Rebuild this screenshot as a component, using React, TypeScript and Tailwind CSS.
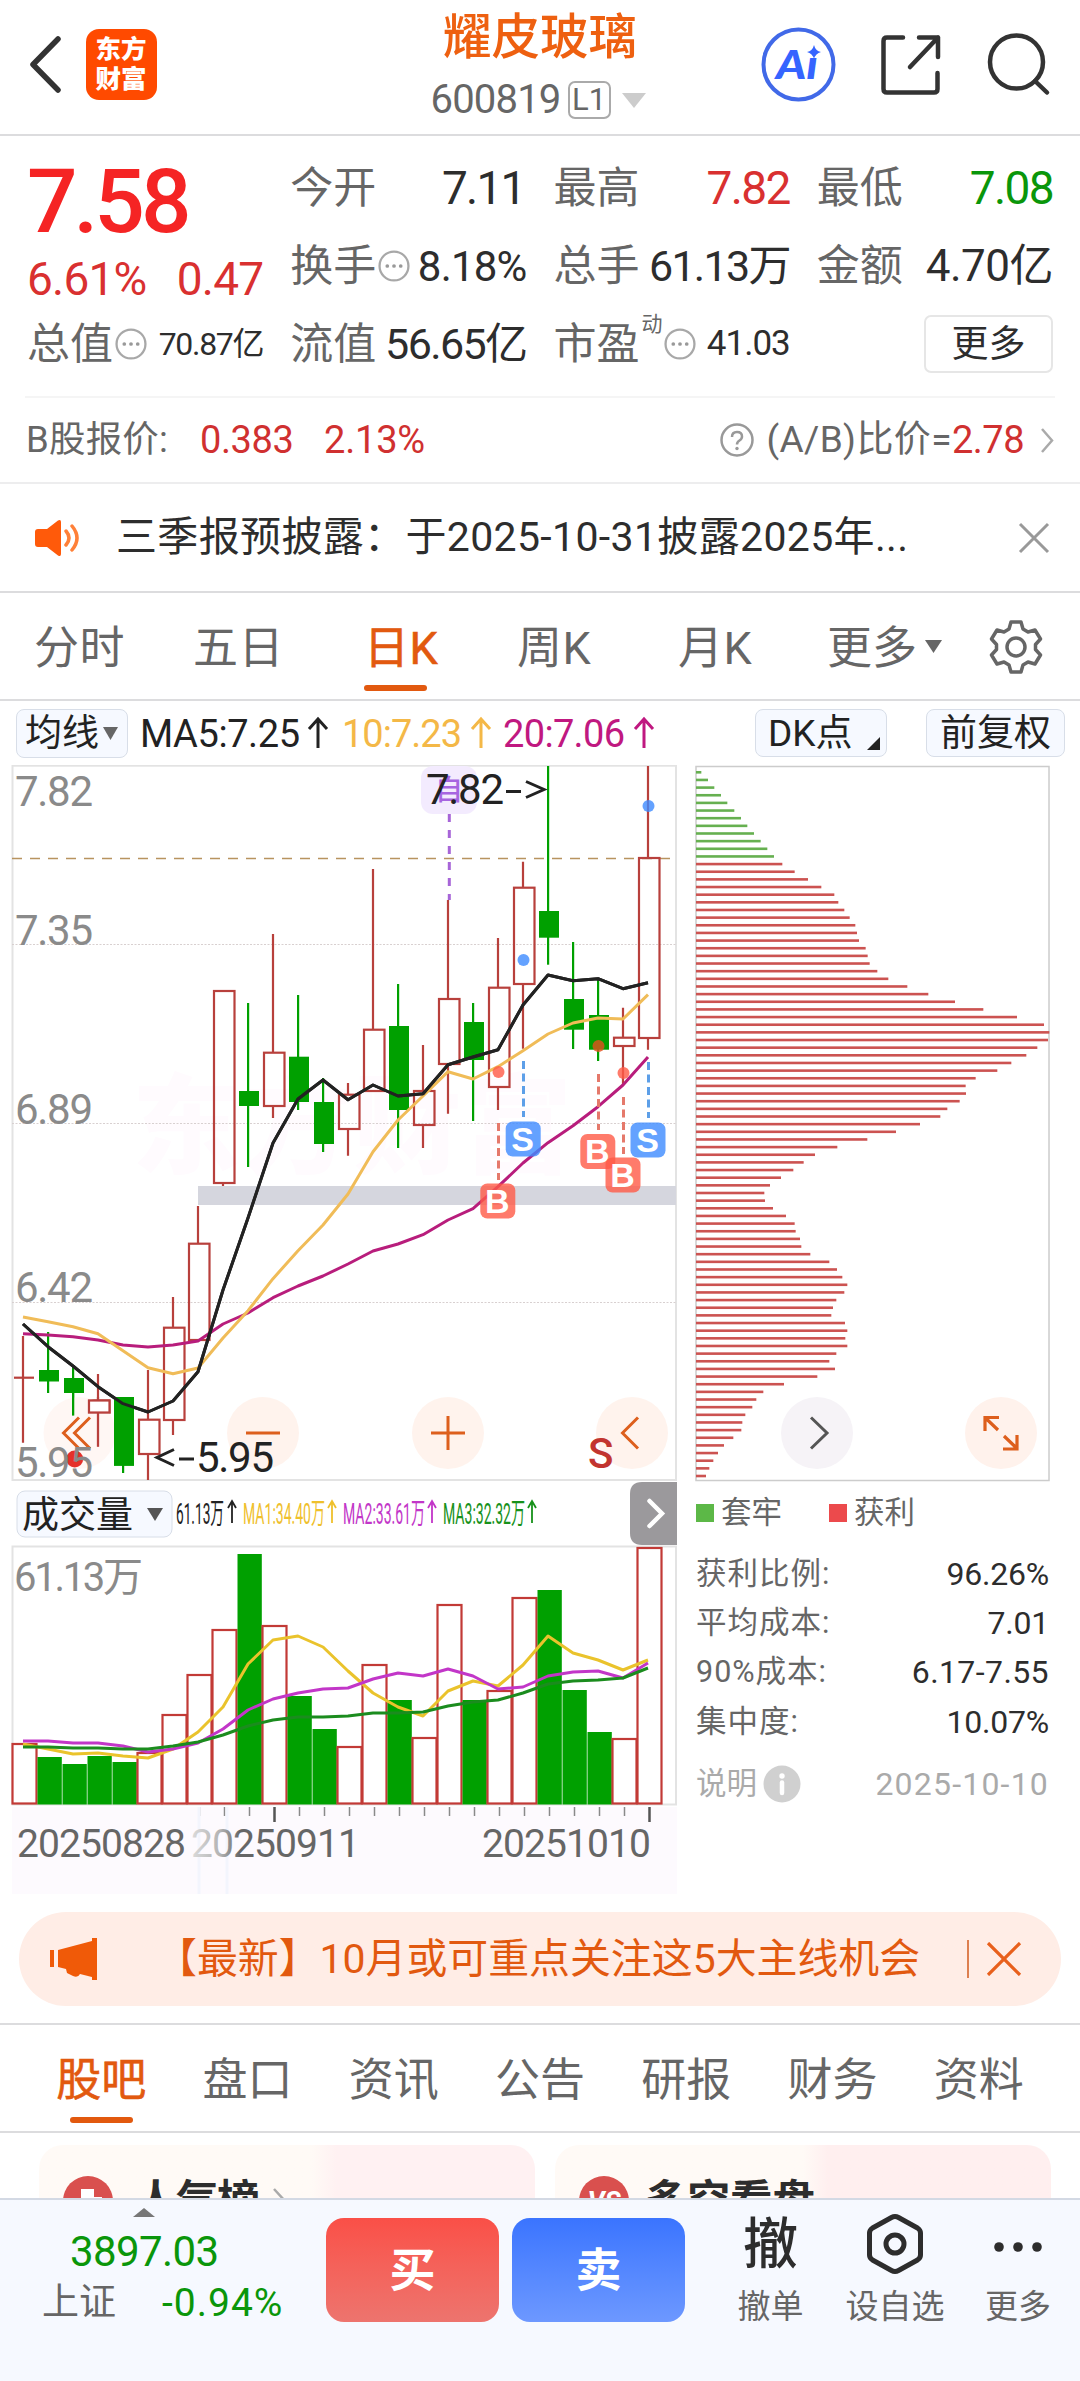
import type { ReactNode } from 'react';
import { clsx } from 'clsx';

type Candle = [high: number, low: number, top: number, bottom: number, up: boolean];

const RED = '#b8403c';
const GREEN = '#00a000';

// Sessions are laid out 25px apart, the first one at x = 23
const sx = (i: number) => 23 + i * 25;

const CANDLES: Candle[] = [
    [1336, 1442.7, 1377.7, 1377.7, true],
    [1332, 1393, 1370, 1381.5, false],
    [1367, 1415.5, 1378, 1393, false],
    [1374, 1446.7, 1400.5, 1412.5, true],
    [1397, 1473, 1397, 1465.7, false],
    [1370, 1480, 1419.7, 1454, true],
    [1297, 1435, 1327.7, 1420, true],
    [1206, 1340, 1243.7, 1340, true],
    [991, 1186, 991, 1183, true],
    [1003, 1167, 1091, 1106, false],
    [934, 1118, 1052.7, 1106, true],
    [995, 1110, 1056.7, 1102, false],
    [1078, 1152, 1102, 1144, false],
    [1083, 1155.7, 1094.7, 1129, true],
    [869, 1091, 1029.7, 1091, true],
    [984, 1148, 1026, 1110, false],
    [1045, 1148, 1091, 1125, true],
    [900, 1113.7, 999, 1064, true],
    [1003, 1121, 1022, 1060, false],
    [938, 1110, 987.7, 1087, true],
    [861.7, 1048.7, 887.7, 984, true],
    [766, 964.7, 911, 937.7, false],
    [942, 1049, 999, 1029.7, false],
    [979, 1061, 1015, 1049.7, false],
    [1007.7, 1085, 1037.7, 1046, true],
    [766, 1049.7, 858, 1038, true],
];

const MA5 = [1324, 1346.7, 1366, 1386.7, 1403.7, 1412, 1401, 1371.7, 1290, 1218, 1143, 1099, 1080, 1099.7, 1085, 1096, 1093.7, 1064.7, 1057, 1049.7, 1005, 975, 980.7, 978.7, 988.7, 982.7];
const MA10 = [1317, 1321.7, 1326.7, 1333.7, 1350.7, 1367.7, 1373.7, 1368, 1338, 1310.7, 1278.7, 1250.7, 1225, 1194, 1151.7, 1120, 1096, 1071.7, 1079, 1066.7, 1050.7, 1034, 1023, 1018, 1019, 994.7];
const MA20 = [1333.7, 1335, 1336.7, 1340, 1345, 1347, 1345, 1341, 1324, 1313, 1297.7, 1286, 1276, 1264, 1251, 1244, 1234.7, 1220, 1208.7, 1186.7, 1163, 1142.7, 1125.7, 1106.7, 1085, 1057];

const VOLUME = [273, 287, 294, 286, 292, 282, 244, 204, 159, 84, 155, 226, 259, 276, 194, 230, 267, 134, 230, 220, 127, 120, 220, 262, 268, 77];
const VOLUME_DOWN = [1, 2, 3, 4, 9, 11, 12, 15, 18, 21, 22, 23];
const VMA1 = [274, 279, 284, 283, 286, 288, 279, 262, 237, 194, 170, 166, 177, 201, 223, 237, 246, 221, 211, 216, 195, 166, 183, 190, 200, 190];
const VMA2 = [271, 271, 273, 273, 276, 282, 279, 273, 259, 240, 229, 223, 219, 218, 209, 203, 206, 199, 206, 219, 217, 206, 202, 201, 208, 193];
const VMA3 = [277, 277, 278, 278, 279, 279, 276, 272, 265, 256, 250, 247, 247, 246, 243, 243, 242, 236, 232, 230, 223, 214, 211, 210, 208, 198];

const CHIPS = [
    16, 36, 55, 75, 94, 115, 135, 154, 174, 194, 214, 234, 259, 296, 336, 376, 415, 427, 445, 461, 478, 483, 489, 509, 515, 521, 544, 577, 634, 697, 777,
    862, 963, 1044, 1060, 1056, 1024, 991, 946, 904, 839, 809, 810, 791, 754, 733, 672, 600, 514, 424, 357, 323, 292, 255, 222, 205, 207, 231, 270, 296,
    299, 312, 316, 343, 400, 423, 439, 454, 445, 421, 411, 406, 447, 454, 448, 454, 421, 400, 417, 364, 264, 202, 181, 169, 148, 139, 136, 112, 84, 66,
    52, 40, 30,
];
const TRAPPED_LEVELS = 12;

const line = (values: number[], offset = 0) => values.map((v, i) => `${sx(i)},${v + offset}`).join(' ');

function Rule({ className }: { className?: string }) {
    return <div className={clsx('h-[2px] shrink-0', className ?? 'bg-[#dcdcde]')} />;
}

function MoreDots() {
    return (
        <svg width="32" height="32" viewBox="0 0 31 31" className="ml-[2px] shrink-0">
            <circle cx="15.5" cy="15.5" r="14" fill="none" stroke="#a8a8a8" strokeWidth="2.200" />
            <circle cx="9" cy="15.5" r="1.8" fill="#999" />
            <circle cx="15.5" cy="15.5" r="1.8" fill="#999" />
            <circle cx="22" cy="15.5" r="1.8" fill="#999" />
        </svg>
    );
}

function Header() {
    return (
        <header className="flex h-[134px] shrink-0 items-start">
            <svg width="160" height="134" viewBox="0 0 160 134">
                <path d="M58 39 L33 64.5 L58 90" fill="none" stroke="#333" strokeWidth="5.5" strokeLinecap="round" strokeLinejoin="round" />
                <rect x="86" y="29" width="71" height="71" rx="13" fill="#ff4a00" />
                <g fill="#fff" fontSize="25.5" fontWeight="900" fontFamily="'Noto Sans CJK SC', sans-serif">
                    <text x="95.500" y="58" textLength="51">东方</text>
                    <text x="95.500" y="88" textLength="51">财富</text>
                </g>
            </svg>
            <div className="flex flex-1 flex-col items-center pl-[151px]">
                <h1 className="mt-[12px] pl-[9px] text-[48.5px] leading-[52px] font-medium text-[#ee6010]">耀皮玻璃</h1>
                <div className="mt-[13px] flex h-[46px] items-center pl-[5px] text-[#666]">
                    <span className="text-[40px] tracking-[-0.8px]">600819</span>
                    <span className="ml-[7px] flex h-[38px] w-[43px] items-center justify-center rounded-[7px] border-2 border-[#aaa] text-[31px]">L1</span>
                    <svg width="24" height="15" viewBox="0 0 24 15" className="ml-[11px]">
                        <path d="M0 0h24L12 15z" fill="#ccc" />
                    </svg>
                </div>
            </div>
            <svg width="320" height="134" viewBox="760 0 320 134">
                <circle cx="798.500" cy="64.500" r="35" fill="none" stroke="#4169e8" strokeWidth="4" />
                <text x="776" y="79" fontSize="40" fontWeight="900" fontStyle="italic" fill="#3564ff" textLength="42" lengthAdjust="spacingAndGlyphs" fontFamily="Lato, sans-serif">Aı</text>
                <path d="M814 45q1.500 6 7 7q-5.500 1.500-7 7q-1.500-5.500-7-7q5.500-1 7-7z" fill="#3564ff" />
                <g fill="none" stroke="#333" strokeWidth="4.500" strokeLinecap="round" strokeLinejoin="round">
                    <path d="M903 37.500H887q-3.500 0-3.500 3.500V89q0 3.500 3.500 3.500H934q3.500 0 3.500-3.500V73" />
                    <path d="M919 37.500H938V57 M938 37.500L910 67" />
                    <circle cx="1016.500" cy="62" r="26.500" />
                    <path d="M1035 81L1047 92.500" />
                </g>
            </svg>
        </header>
    );
}

function Quote({ label, value, note, icon, size, color }: { label: string; value: string; note?: string; icon?: boolean; size: string; color?: string }) {
    return (
        <div className="flex h-[78px] items-center justify-between whitespace-nowrap">
            <span className="flex items-center text-[43px] text-[#666]">
                {label}
                {note && <sup className="relative -top-[20px] -mr-[1px] ml-[2px] text-[21px] text-[#666]">{note}</sup>}
                {icon && <MoreDots />}
            </span>
            <span className={clsx(size, color ?? 'text-[#2d2d2d]')}>{value}</span>
        </div>
    );
}

function Quotes() {
    return (
        <section className="grid h-[260px] shrink-0 grid-cols-4 gap-x-[27px] px-[27px] pt-[13px]">
            <div className="flex flex-col whitespace-nowrap">
                <div className="flex h-[105px] items-center text-[89px] font-medium tracking-[-4px] text-[#f52424]">7.58</div>
                <div className="flex h-[51px] items-center justify-between text-[46px] tracking-[-0.8px] text-[#d93030]">
                    <span>6.61%</span>
                    <span>0.47</span>
                </div>
                <Quote label="总值" icon value="70.87亿" size="text-[32px] tracking-[-1.3px]" />
            </div>
            <div>
                <Quote label="今开" value="7.11" size="text-[46px] tracking-[-1.8px] pr-[2px]" />
                <Quote label="换手" icon value="8.18%" size="text-[42px] tracking-[-0.8px]" />
                <Quote label="流值" value="56.65亿" size="text-[43px] tracking-[-1.6px]" />
            </div>
            <div>
                <Quote label="最高" value="7.82" size="text-[46px] tracking-[-1.6px]" color="text-[#d93030]" />
                <Quote label="总手" value="61.13万" size="text-[43px] tracking-[-1.7px]" />
                <Quote label="市盈" note="动" icon value="41.03" size="text-[35px] tracking-[-1px]" />
            </div>
            <div>
                <Quote label="最低" value="7.08" size="text-[46px] tracking-[-1.6px]" color="text-[#0a960a]" />
                <Quote label="金额" value="4.70亿" size="text-[44px] tracking-[-0.5px]" />
                <div className="flex h-[78px] items-center justify-end">
                    <button className="h-[58px] w-[129px] rounded-[7px] border-2 border-[#e6e6e6] text-[37px] leading-none text-[#2d2d2d]">更多</button>
                </div>
            </div>
        </section>
    );
}

function BShare() {
    return (
        <section className="flex h-[84px] shrink-0 items-center px-[26px] text-[37px] whitespace-nowrap text-[#666]">
            <span className="w-[174px] text-[36.5px] tracking-[0.2px]">B股报价:</span>
            <span className="w-[124px] text-[38px] tracking-[-0.4px] text-[#d03030]">0.383</span>
            <span className="text-[38px] tracking-[-0.2px] text-[#d03030]">2.13%</span>
            <div className="ml-auto flex items-center">
                <svg width="34" height="34" viewBox="0 0 34 34">
                    <circle cx="17" cy="17" r="15.500" fill="none" stroke="#999" strokeWidth="2.500" />
                    <path d="M12 14q0-5 5-5t5 4.500q0 2.500-2.500 4T17 21.500" fill="none" stroke="#999" strokeWidth="2.500" />
                    <circle cx="17" cy="25.500" r="1.700" fill="#999" />
                </svg>
                <span className="ml-[12px] tracking-[0.4px]">(A/B)比价=</span>
                <span className="text-[38px] tracking-[-0.5px] text-[#d03030]">2.78</span>
                <svg width="13" height="25" viewBox="0 0 13 25" className="ml-[17px]">
                    <path d="M1 1l10 11.500L1 24" fill="none" stroke="#aaa" strokeWidth="2.500" />
                </svg>
            </div>
        </section>
    );
}

function Notice() {
    return (
        <section className="flex h-[107px] shrink-0 items-center pr-[29px] pl-[34px]">
            <svg width="48" height="40" viewBox="0 0 48 40">
                <path d="M4 11h9L24 2.500q3-1.500 3 1.500v32q0 3-3 1.500L13 29H4q-3 0-3-3V14q0-3 3-3z" fill="#ff5a0a" />
                <path d="M32 13q6 7 0 14 M38 8q10 12 0 24" fill="none" stroke="#ff8038" strokeWidth="3.500" strokeLinecap="round" />
            </svg>
            <span className="ml-[34px] text-[41px] tracking-[0.35px] whitespace-nowrap text-[#2d2d2d]">三季报预披露：于2025-10-31披露2025年...</span>
            <svg width="34" height="34" viewBox="0 0 34 34" className="ml-auto">
                <path d="M3 3l28 28M31 3L3 31" stroke="#999" strokeWidth="3" />
            </svg>
        </section>
    );
}

function PeriodTabs() {
    const tabs = ['分时', '五日', '日K', '周K', '月K'];
    const widths = ['w-[159px]', 'w-[171px]', 'w-[153px]', 'w-[161px]', 'w-[149px]'];
    return (
        <nav className="flex h-[106px] shrink-0 items-stretch pr-[36px] pl-[34px] text-[45px] whitespace-nowrap text-[#666]">
            {tabs.map((tab, i) => (
                <div key={tab} className={clsx('flex flex-col items-start', widths[i])}>
                    <span className={clsx('flex h-[92px] items-center pt-[20px] tracking-[0.5px]', tab === '日K' && 'text-[#e2590f] [-webkit-text-stroke:0.6px]')}>{tab}</span>
                    {tab === '日K' && <span className="h-[6px] w-[63px] rounded-full bg-[#e2590f]" />}
                </div>
            ))}
            <div className="flex items-center pt-[5px]">
                更多
                <svg width="17" height="13" viewBox="0 0 17 13" className="mb-[4px] ml-[8px]">
                    <path d="M0 0h17L8.500 13z" fill="#666" />
                </svg>
            </div>
            <svg width="56" height="56" viewBox="0 0 56 56" className="mt-[26px] ml-auto">
                <path
                    d="M23 3h10l2 7 5 3 7-2 5.500 9-5 5.500v5l5 5.500-5.500 9-7-2-5 3-2 7H23l-2-7-5-3-7 2-5.500-9 5-5.500v-5l-5-5.500 5.500-9 7 2 5-3z"
                    fill="none"
                    stroke="#666"
                    strokeWidth="3.500"
                    strokeLinejoin="round"
                />
                <circle cx="28" cy="28" r="9" fill="none" stroke="#666" strokeWidth="3.500" />
            </svg>
        </nav>
    );
}

function Pill({ className, children }: { className: string; children: ReactNode }) {
    return <div className={clsx('flex items-center rounded-[8px] border border-[#d8dee8] bg-[#f6f9ff] text-[37px] leading-none whitespace-nowrap text-[#222]', className)}>{children}</div>;
}

function IndicatorBar() {
    return (
        <div className="flex h-[64px] shrink-0 items-center pr-[15px] pl-[16px] text-[37px] whitespace-nowrap">
            <Pill className="h-[49px] w-[112px] pl-[8px]">
                均线
                <svg width="15" height="13" viewBox="0 0 15 13" className="ml-[4px]">
                    <path d="M0 0h15L7.500 13z" fill="#666" />
                </svg>
            </Pill>
            <svg width="520" height="50" viewBox="136 708 520 50" className="ml-[8px]" fontSize="38">
                <text x="140" y="746.500" textLength="160" fill="#222">MA5:7.25</text>
                <text x="342" y="746.500" textLength="120" fill="#f4b847">10:7.23</text>
                <text x="503" y="746.500" textLength="122" fill="#c01880">20:7.06</text>
                <g fill="none" strokeWidth="3">
                    <path d="M318 748V720M309 729l9-10 9 10" stroke="#222" />
                    <path d="M481 748V720M472 729l9-10 9 10" stroke="#f4b847" />
                    <path d="M644 748V720M635 729l9-10 9 10" stroke="#c01880" />
                </g>
            </svg>
            <Pill className="ml-auto h-[48px] w-[132px] justify-between pr-[6px] pl-[12px]">
                DK点
                <svg width="13" height="13" viewBox="0 0 13 13" className="mt-[20px]">
                    <path d="M13 0v13H0z" fill="#222" />
                </svg>
            </Pill>
            <Pill className="ml-[39px] h-[48px] w-[139px] justify-center">前复权</Pill>
        </div>
    );
}

function Signal({ x, y, kind }: { x: number; y: number; kind: 'B' | 'S' }) {
    return (
        <g>
            <rect x={x} y={y} width="35" height="35" rx="7" fill={kind === 'B' ? '#ff5a46' : '#3d8bff'} fillOpacity="0.8" />
            <text x={x + 17} y={y + 29} textAnchor="middle" fontSize="34" fontWeight="700" fill="#fff" fontFamily="'Liberation Sans', sans-serif">
                {kind}
            </text>
        </g>
    );
}

function KLineChart() {
    return (
        <svg width="690" height="717" viewBox="0 765 690 717" className="block shrink-0" fontSize="42">
            <text x="132" y="1165" fontSize="108" fontWeight="900" fill="#fffbfe" textLength="440">东方财富</text>
            <rect x="12.500" y="765.700" width="663.500" height="714.300" fill="none" stroke="#e3e3e3" strokeWidth="2" />
            {[944.5, 1123.5, 1302.5].map((y) => (
                <path key={y} d={`M12 ${y}H676`} stroke="#d8d0d0" strokeWidth="1" strokeDasharray="2 1.500" />
            ))}
            <path d="M12 858.500H670" stroke="#b8935f" strokeWidth="1.400" strokeDasharray="10 8" />
            <rect x="198" y="1186" width="478" height="19" fill="#d5d6de" />

            {CANDLES.map(([high, low, top, bottom, up], i) =>
                up ? (
                    <g key={i} stroke={RED} strokeWidth="2.200" fill="none">
                        <path d={`M${sx(i)} ${high}V${top}M${sx(i)} ${bottom}V${low}`} />
                        {top === bottom ? <path d={`M${sx(i) - 9} ${top}H${sx(i) + 11}`} /> : <rect x={sx(i) - 9} y={top} width="20.500" height={bottom - top} />}
                    </g>
                ) : (
                    <g key={i} fill={GREEN}>
                        <rect x={sx(i) - 1} y={high} width="2.200" height={low - high} />
                        <rect x={sx(i) - 9} y={top} width="20" height={bottom - top} />
                    </g>
                ),
            )}

            <g fill="none" strokeWidth="3" strokeLinejoin="round">
                <polyline points={line(MA20)} stroke="#b81d7c" />
                <polyline points={line(MA10)} stroke="#f0bc58" />
                <polyline points={line(MA5)} stroke="#222" />
            </g>

            {/* Trade marks */}
            <g fill="none" strokeWidth="3" strokeDasharray="8 4.500">
                <path d="M523.500 1061V1117M648.500 1062V1118" stroke="#5d9fe8" />
                <path d="M498.500 1123V1180M598.500 1074V1130M623.500 1097V1154" stroke="#e5796b" />
                <path d="M449.300 814V900" stroke="#a765d8" strokeDasharray="8 8" />
            </g>
            <g fillOpacity="0.8">
                <circle cx="523.500" cy="960" r="6" fill="#3d8bff" />
                <circle cx="648.500" cy="806" r="6" fill="#3d8bff" />
                <circle cx="498.500" cy="1072" r="6" fill="#ff5a46" />
                <circle cx="598.500" cy="1046" r="6" fill="#e5501e" />
                <circle cx="623.500" cy="1073" r="6" fill="#ff5a46" />
            </g>
            <Signal x={505.7} y={1121.5} kind="S" />
            <Signal x={480.3} y={1183.5} kind="B" />
            <Signal x={580.3} y={1134} kind="B" />
            <Signal x={605.5} y={1157.5} kind="B" />
            <Signal x={630.5} y={1122.5} kind="S" />
            <rect x="421" y="766" width="56" height="48" rx="12" fill="#f3ebfe" />
            <text x="449" y="800" fontSize="28" fontWeight="500" fill="#a765e0" textAnchor="middle">自</text>

            {/* Zoom and pan controls */}
            {[79.5, 263, 448, 632].map((cx) => (
                <circle key={cx} cx={cx} cy="1433" r="36" fill="#fff2ec" fillOpacity={cx < 100 ? 0.6 : 0.93} />
            ))}
            {/* The first candles stay readable on top of the rewind button */}
            <g stroke={RED} strokeWidth="2.200" fill="none">
                <path d="M98 1397V1400.500M98 1412.500V1446.700" />
                <rect x="89" y="1400.500" width="20.500" height="12" fill="#fff" />
            </g>
            <g fill={GREEN}>
                <rect x="72" y="1393" width="2.200" height="22.500" />
                <rect x="114" y="1397" width="20" height="68.700" />
            </g>
            <polyline points={line(MA5)} fill="none" stroke="#222" strokeWidth="3" strokeLinejoin="round" />
            <g fill="none" stroke="#dd5f1d" strokeWidth="3">
                <path d="M79 1417.500L63.500 1433 79 1448.500M90 1417.500L74.500 1433 90 1448.500" />
                <path d="M246 1433H280M431 1433H465M448 1416V1450M638 1417.500L622.500 1433 638 1448.500" />
            </g>
            <circle cx="74.700" cy="1459" r="8.500" fill="#e5302a" />
            <text x="588" y="1468" fontSize="42" fontWeight="500" fill="#c23530">S</text>

            <g fill="#8a8a8a">
                <text x="15" y="806" textLength="78">7.82</text>
                <text x="15" y="945" textLength="78">7.35</text>
                <text x="15" y="1124" textLength="78">6.89</text>
                <text x="15" y="1302" textLength="78">6.42</text>
                <text x="15" y="1477" textLength="78">5.95</text>
            </g>
            <g fill="#222">
                <text x="426" y="804" textLength="78">7.82</text>
                <path d="M506 791.500H521M526 781.500L544 789.500 526 797.500" fill="none" stroke="#222" strokeWidth="3" />
                <text x="196" y="1472" textLength="78">5.95</text>
                <path d="M179 1459H194M174 1449.500L157 1457.500 174 1465.500" fill="none" stroke="#222" strokeWidth="3" />
            </g>
        </svg>
    );
}

function VolumeChart() {
    return (
        <svg width="690" height="412" viewBox="0 1482 690 412" className="block shrink-0">
            <rect x="17" y="1491" width="155" height="46" rx="8" fill="#f6f9ff" stroke="#d8dee8" />
            <text x="22" y="1528" fontSize="37" textLength="111" fill="#222">成交量</text>
            <path d="M147 1508h16l-8 13z" fill="#555" />
            <g fontSize="29">
                <text x="176" y="1523.500" textLength="48" lengthAdjust="spacingAndGlyphs" fill="#222">61.13万</text>
                <text x="243" y="1523.500" textLength="82" lengthAdjust="spacingAndGlyphs" fill="#efc02c">MA1:34.40万</text>
                <text x="343" y="1523.500" textLength="82" lengthAdjust="spacingAndGlyphs" fill="#c236c8">MA2:33.61万</text>
                <text x="443" y="1523.500" textLength="82" lengthAdjust="spacingAndGlyphs" fill="#17911a">MA3:32.32万</text>
            </g>
            <g fill="none" strokeWidth="1.800">
                <path d="M232 1523V1502M228 1508l4-7 4 7" stroke="#222" />
                <path d="M332 1523V1502M328 1508l4-7 4 7" stroke="#efc02c" />
                <path d="M432 1523V1502M428 1508l4-7 4 7" stroke="#c236c8" />
                <path d="M532 1523V1502M528 1508l4-7 4 7" stroke="#17911a" />
            </g>
            <path d="M677 1482v63h-35q-12 0-12-12v-39q0-12 12-12z" fill="#9b999c" />
            <path d="M649.500 1501l12.500 12.500-12.500 12.500" fill="none" stroke="#fff" strokeWidth="4.500" strokeLinecap="round" />

            <rect x="12" y="1807" width="665" height="87" fill="#fdfafe" />
            <rect x="12.500" y="1546.500" width="663.500" height="258" fill="none" stroke="#e3e3e3" strokeWidth="2" />
            <text x="14" y="1591" fontSize="40" textLength="129" fill="#8a8a8a">61.13万</text>
            {VOLUME.map((v, i) =>
                VOLUME_DOWN.includes(i) ? (
                    <rect key={i} x={sx(i) - 10.5} y={v + 1470} width="24.300" height={334.5 - v} fill={GREEN} />
                ) : (
                    <rect key={i} x={sx(i) - 10.5} y={v + 1471} width="24" height={332.5 - v} fill="#fff" stroke="#c23a36" strokeWidth="2.200" />
                ),
            )}
            <g fill="none" strokeWidth="3" strokeLinejoin="round">
                <polyline points={line(VMA1, 1470)} stroke="#eac32c" />
                <polyline points={line(VMA2, 1470)} stroke="#c236c8" />
                <polyline points={line(VMA3, 1470)} stroke="#1b8c1e" />
            </g>

            {/* Date axis */}
            {Array.from({ length: 19 }, (_, i) => {
                const major = i === 3 || i === 18;
                return <path key={i} d={`M${199.5 + i * 25} 1807V${major ? 1822 : 1816}`} stroke={major ? '#555' : '#8a8a8a'} strokeWidth={major ? 2.5 : 1.5} />;
            })}
            <defs>
                <linearGradient id="fade" x1="190" x2="240" y1="0" y2="0" gradientUnits="userSpaceOnUse">
                    <stop offset="0" stopColor="#dcdcdc" />
                    <stop offset="0.600" stopColor="#b4b4b4" />
                    <stop offset="1" stopColor="#666" />
                </linearGradient>
            </defs>
            <path d="M199 1807V1894M227 1807V1894" stroke="#f3f5fd" strokeWidth="3" />
            <g fontSize="39" fill="#666">
                <text x="17" y="1857" textLength="169">20250828</text>
                <text x="191" y="1857" textLength="169" fill="url(#fade)">20250911</text>
                <text x="482" y="1857" textLength="169">20251010</text>
            </g>
        </svg>
    );
}

function ChipChart() {
    return (
        <svg width="390" height="717" viewBox="690 765 390 717" className="block shrink-0">
            <rect x="696" y="766.500" width="353" height="714" fill="none" stroke="#ccc" strokeWidth="1.500" />
            {CHIPS.map((width, i) => (
                <rect key={i} x="696" y={771 + i * 7.649} width={width / 3} height="2.600" fill={i < TRAPPED_LEVELS ? '#66b050' : '#cc5351'} />
            ))}
            <circle cx="817" cy="1433" r="36" fill="#f6f3f7" />
            <path d="M811 1417.500L827 1433 811 1448.500" fill="none" stroke="#555" strokeWidth="3" />
            <circle cx="1001" cy="1433" r="36" fill="#fff2ec" />
            <path d="M998 1430L985.500 1418M999 1417.500H985V1431M1004 1436L1016.500 1448M1003 1449H1017V1435" fill="none" stroke="#dd5f1d" strokeWidth="3.200" />
        </svg>
    );
}

const CHIP_STATS = [
    ['获利比例:', '96.26%'],
    ['平均成本:', '7.01'],
    ['90%成本:', '6.17-7.55'],
    ['集中度:', '10.07%'],
];

function ChipStats() {
    return (
        <div className="flex flex-col pr-[31px] pl-[6px] text-[30.5px] text-[#666]">
            <div className="flex h-[61px] items-center">
                <span className="size-[18px] bg-[#5cb847]" />
                <span className="ml-[7px] w-[108px]">套牢</span>
                <span className="size-[18px] bg-[#ec4a4c]" />
                <span className="ml-[7px]">获利</span>
            </div>
            <div className="mt-[6px] flex flex-col">
                {CHIP_STATS.map(([label, value], i) => (
                    <div key={label} className="flex h-[49.3px] items-center justify-between">
                        <span className="tracking-[1px]">{label}</span>
                        <span className={clsx('text-[32px] text-[#2d2d2d]', i === 2 ? 'tracking-[0.4px]' : 'tracking-[-0.2px]')}>{value}</span>
                    </div>
                ))}
            </div>
            <div className="mt-[10px] flex h-[56px] items-center text-[#aaa]">
                <span>说明</span>
                <svg width="38" height="38" viewBox="0 0 38 38" className="ml-[6px]">
                    <circle cx="19" cy="19" r="18.500" fill="#d0d0d0" />
                    <circle cx="19" cy="11" r="2.700" fill="#fff" />
                    <path d="M19 17.500V28" stroke="#fff" strokeWidth="4.500" strokeLinecap="round" />
                </svg>
                <span className="ml-auto text-[32px] tracking-[1.2px]">2025-10-10</span>
            </div>
        </div>
    );
}

function Banner() {
    return (
        <div className="mx-[19px] mt-[18px] flex h-[94px] shrink-0 items-center rounded-full bg-[#ffede6] pr-[39px] pl-[31px] text-[#e2590f]">
            <svg width="48" height="42" viewBox="0 0 48 42">
                <path d="M0 12h4v17H0zM8 12L42 3V0h5v42h-5v-3l-12-3q-2 4-7 2l-6-3-1-4-8-2z" fill="#f05a08" />
            </svg>
            <span className="ml-[58px] w-[770px] pt-[2px] text-[40.9px] whitespace-nowrap">【最新】10月或可重点关注这5大主线机会</span>
            <span className="ml-auto h-[38px] w-[2px] bg-[#dd8050]" />
            <svg width="36" height="34" viewBox="0 0 36 34" className="ml-[17px]">
                <path d="M2 1l32 32M34 1L2 33" stroke="#e8601c" strokeWidth="3.200" />
            </svg>
        </div>
    );
}

function SectionTabs() {
    return (
        <nav className="flex h-[106px] shrink-0 px-[28px] text-[45px] whitespace-nowrap text-[#666]">
            {['股吧', '盘口', '资讯', '公告', '研报', '财务', '资料'].map((tab, i) => (
                <div key={tab} className={clsx('flex flex-1 flex-col items-center', i === 0 && 'text-[#e2590f] [-webkit-text-stroke:0.6px]')}>
                    <span className="flex h-[92px] items-center pt-[19px]">{tab}</span>
                    {i === 0 && <span className="h-[6px] w-[63px] rounded-full bg-[#e2590f]" />}
                </div>
            ))}
        </nav>
    );
}

function PromoCards() {
    return (
        <div className="flex h-[65px] shrink-0 gap-[20px] overflow-hidden px-[39px] pt-[12px] pr-[29px] text-[42.5px] font-bold text-[#2d2d2d]">
            <div className="flex h-[112px] w-[496px] shrink-0 items-center rounded-[24px] bg-linear-to-r from-[#fffaf6] from-55% to-[#fff1f2] to-60% pl-[24px]">
                <svg width="50" height="50" viewBox="0 0 50 50">
                    <circle cx="25" cy="25" r="25" fill="#d9504e" />
                    <path d="M10 24h8V13h13v8h8v20H10z" fill="#fff" />
                </svg>
                <span className="ml-[22px] -tracking-[1.5px]">人气榜</span>
                <svg width="14" height="26" viewBox="0 0 14 26" className="ml-[15px]">
                    <path d="M1 1l11 12L1 25" fill="none" stroke="#aaa" strokeWidth="2.500" />
                </svg>
            </div>
            <div className="flex h-[112px] w-[496px] shrink-0 items-center rounded-[24px] bg-linear-to-r from-[#fffaf6] from-50% to-[#ffefef] to-55% pl-[24px]">
                <svg width="50" height="50" viewBox="0 0 50 50">
                    <circle cx="25" cy="25" r="25" fill="#d9504e" />
                    <text x="25" y="35" fontSize="27" fontWeight="700" fontStyle="italic" fill="#fff" textAnchor="middle">VS</text>
                </svg>
                <span className="ml-[16px]">多空看盘</span>
            </div>
        </div>
    );
}

function BottomBar() {
    return (
        <footer className="flex h-[181px] shrink-0 bg-[#f6f9ff] whitespace-nowrap">
            <div className="flex w-[326px] shrink-0 flex-col">
                <svg width="22" height="9" viewBox="0 0 22 9" className="mt-[8px] ml-[133px]">
                    <path d="M0 9L11 0l11 9z" fill="#777" />
                </svg>
                <div className="mt-[9px] flex h-[50px] items-center pl-[70px] text-[42px] tracking-[-0.6px] text-[#0a960a]">3897.03</div>
                <div className="mt-[2px] flex h-[50px] items-center pl-[42px] text-[37px] text-[#666]">
                    上证
                    <span className="ml-[46px] text-[39px] tracking-[1px] text-[#0a960a]">-0.94%</span>
                </div>
            </div>
            <button className="mt-[18px] h-[104px] w-[173px] shrink-0 rounded-[18px] bg-linear-to-b from-[#fa4f47] to-[#ed746e] text-[46px] font-bold text-white">买</button>
            <button className="mt-[18px] ml-[13px] h-[104px] w-[173px] shrink-0 rounded-[18px] bg-linear-to-b from-[#3a74ff] to-[#6d98ff] text-[46px] font-bold text-white">卖</button>
            <div className="ml-[35px] flex flex-1 pt-[11px] text-[33px] text-[#666]">
                <div className="flex w-[101px] flex-col items-center">
                    <span className="flex h-[66px] items-center text-[55px] leading-none font-medium text-[#2d2d2d]">撤</span>
                    <span className="mt-[5px] leading-[50px]">撤单</span>
                </div>
                <div className="flex w-[148px] flex-col items-center">
                    <svg width="60" height="66" viewBox="0 0 60 66" fill="none" stroke="#2d2d2d" strokeWidth="5" strokeLinejoin="round">
                        <path d="M26.500 6.500q3.500-2 7 0l19 10.500q3 2 3 5v22q0 3-3 5l-19 10.500q-3.500 2-7 0l-19-10.500q-3-2-3-5v-22q0-3 3-5z" />
                        <circle cx="30" cy="33" r="9" />
                    </svg>
                    <span className="mt-[5px] leading-[50px]">设自选</span>
                </div>
                <div className="flex w-[98px] flex-col items-center">
                    <svg width="60" height="66" viewBox="0 0 60 66" fill="#2d2d2d">
                        <circle cx="11" cy="36" r="4.800" />
                        <circle cx="30" cy="36" r="4.800" />
                        <circle cx="49" cy="36" r="4.800" />
                    </svg>
                    <span className="mt-[5px] leading-[50px]">更多</span>
                </div>
            </div>
        </footer>
    );
}

export default function App() {
    return (
        <div className="flex h-[2381px] w-[1080px] flex-col overflow-hidden bg-white font-[Roboto,'Noto_Sans_CJK_SC',sans-serif]">
            <Header />
            <Rule />
            <Quotes />
            <Rule className="mx-[25px] bg-[#f5f5f5]" />
            <BShare />
            <Rule className="bg-[#ededee]" />
            <Notice />
            <Rule />
            <PeriodTabs />
            <Rule />
            <IndicatorBar />
            <div className="flex h-[1129px] shrink-0">
                <div className="flex flex-col">
                    <KLineChart />
                    <VolumeChart />
                </div>
                <div className="flex flex-col">
                    <ChipChart />
                    <ChipStats />
                </div>
            </div>
            <Banner />
            <div className="h-[17px] shrink-0" />
            <Rule />
            <SectionTabs />
            <Rule />
            <PromoCards />
            <Rule className="bg-[#d3d9e4]" />
            <BottomBar />
        </div>
    );
}
